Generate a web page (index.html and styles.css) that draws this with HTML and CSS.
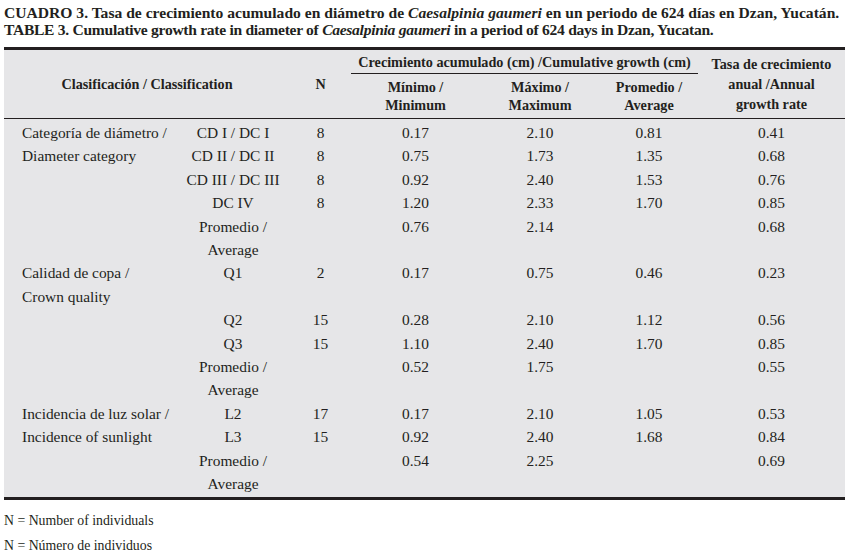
FILE: index.html
```html
<!DOCTYPE html>
<html lang="es">
<head>
<meta charset="utf-8">
<title>Cuadro 3</title>
<link rel="stylesheet" href="styles.css">
</head>
<body>
<div class="page">
  <div class="caption">
    <p>CUADRO 3. Tasa de crecimiento acumulado en diámetro de <i>Caesalpinia gaumeri</i> en un periodo de 624 días en Dzan, Yucatán.</p>
    <p class="en">TABLE 3. Cumulative growth rate in diameter of <i>Caesalpinia gaumeri</i> in a period of 624 days in Dzan, Yucatan.</p>
  </div>
  <table class="data">
    <colgroup>
      <col class="c1"><col class="c2"><col class="c3"><col class="c4"><col class="c5"><col class="c6"><col class="c7">
    </colgroup>
    <thead>
      <tr class="h1">
        <th colspan="2" rowspan="2">Clasificación / Classification</th>
        <th rowspan="2">N</th>
        <th colspan="3" class="group">Crecimiento acumulado (cm) /Cumulative growth (cm)</th>
        <th rowspan="2" class="rate">Tasa de crecimiento<br>anual /Annual<br>growth rate</th>
      </tr>
      <tr class="h2">
        <th>Mínimo /<br>Minimum</th>
        <th>Máximo /<br>Maximum</th>
        <th>Promedio /<br>Average</th>
      </tr>
    </thead>
    <tbody>
      <tr class="first">
        <td rowspan="5" class="cat">Categoría de diámetro /<br>Diameter category</td>
        <td>CD I / DC I</td><td>8</td><td>0.17</td><td>2.10</td><td>0.81</td><td>0.41</td>
      </tr>
      <tr><td>CD II / DC II</td><td>8</td><td>0.75</td><td>1.73</td><td>1.35</td><td>0.68</td></tr>
      <tr><td>CD III / DC III</td><td>8</td><td>0.92</td><td>2.40</td><td>1.53</td><td>0.76</td></tr>
      <tr><td>DC IV</td><td>8</td><td>1.20</td><td>2.33</td><td>1.70</td><td>0.85</td></tr>
      <tr><td>Promedio /<br>Average</td><td></td><td>0.76</td><td>2.14</td><td></td><td>0.68</td></tr>
      <tr>
        <td class="cat">Calidad de copa /<br>Crown quality</td>
        <td>Q1</td><td>2</td><td>0.17</td><td>0.75</td><td>0.46</td><td>0.23</td>
      </tr>
      <tr><td></td><td>Q2</td><td>15</td><td>0.28</td><td>2.10</td><td>1.12</td><td>0.56</td></tr>
      <tr><td></td><td>Q3</td><td>15</td><td>1.10</td><td>2.40</td><td>1.70</td><td>0.85</td></tr>
      <tr><td></td><td>Promedio /<br>Average</td><td></td><td>0.52</td><td>1.75</td><td></td><td>0.55</td></tr>
      <tr>
        <td rowspan="3" class="cat">Incidencia de luz solar /<br>Incidence of sunlight</td>
        <td>L2</td><td>17</td><td>0.17</td><td>2.10</td><td>1.05</td><td>0.53</td>
      </tr>
      <tr><td>L3</td><td>15</td><td>0.92</td><td>2.40</td><td>1.68</td><td>0.84</td></tr>
      <tr class="last"><td>Promedio /<br>Average</td><td></td><td>0.54</td><td>2.25</td><td></td><td>0.69</td></tr>
    </tbody>
  </table>
  <div class="notes">
    <p>N = Number of individuals</p>
    <p>N = Número de individuos</p>
  </div>
</div>
</body>
</html>
```

FILE: styles.css
```css
html, body {
  margin: 0;
  padding: 0;
  background: #ffffff;
}

body {
  font-family: "Liberation Serif", "DejaVu Serif", serif;
  color: #231f20;
}

.page {
  padding: 4px 0 0 4px;
  width: 841px;
}

.caption p {
  margin: 0;
  font-weight: bold;
  font-size: 15.6px;
  line-height: 17px;
  white-space: nowrap;
}

.caption p.en {
  letter-spacing: -0.3px;
}

.data {
  margin-top: 9px;
  width: 841px;
  table-layout: fixed;
  border-collapse: collapse;
  background: #e6e6e8;
  border-top: 3px solid #231f20;
  border-bottom: 3px solid #231f20;
  font-size: 15.4px;
}

.c1 { width: 172px; }
.c2 { width: 114px; }
.c3 { width: 61px; }
.c4 { width: 129px; }
.c5 { width: 120px; }
.c6 { width: 98px; }
.c7 { width: 147px; }

.data th {
  font-weight: bold;
  font-size: 14.2px;
  line-height: 18px;
  text-align: center;
  vertical-align: middle;
  padding: 0;
}

.data thead {
  border-bottom: 1px solid #231f20;
}

.data .h1 th.group {
  height: 23px;
  border-bottom: 1px solid #231f20;
}

.data .h2 th {
  height: 44px;
}

.data th.rate {
  line-height: 20px;
}

.data td {
  padding: 0;
  line-height: 23.4px;
  text-align: center;
  vertical-align: top;
  white-space: nowrap;
}

.data td.cat {
  text-align: left;
  padding-left: 18px;
}

.data tr.first td {
  padding-top: 2px;
}

.data tr.last td {
  padding-bottom: 1px;
}

.notes {
  margin-top: 8px;
}

.notes p {
  margin: 0;
  font-size: 13.8px;
  line-height: 25px;
}
```
